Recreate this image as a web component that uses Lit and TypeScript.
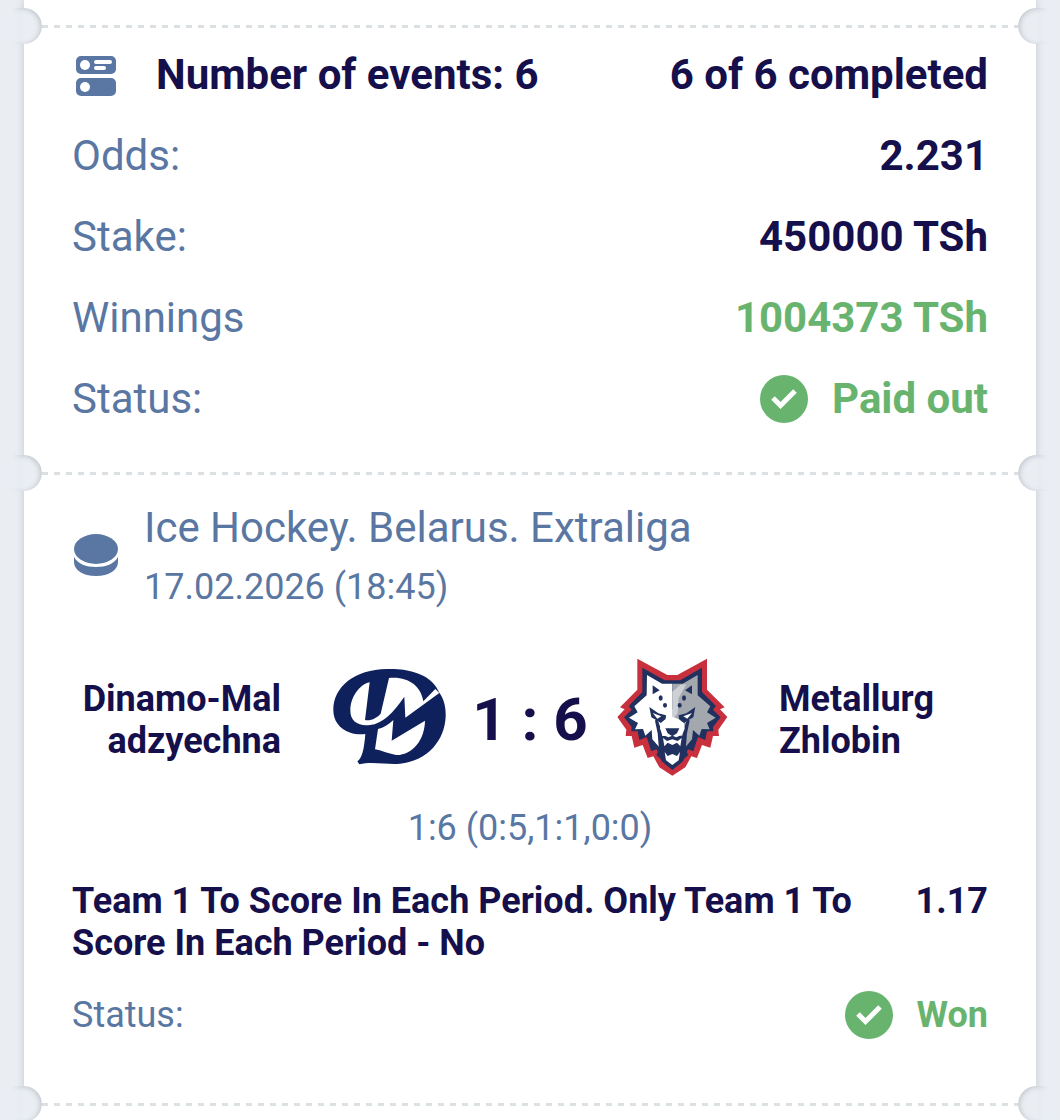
import { LitElement, html, css, svg } from 'lit';
import { customElement, property } from 'lit/decorators.js';

interface BetEvent {
  league: string;
  date: string;
  home: string;
  away: string;
  score: string;
  periods: string;
  market: string;
  odds: string;
  status: string;
}

const EVENT: BetEvent = {
  league: 'Ice Hockey. Belarus. Extraliga',
  date: '17.02.2026 (18:45)',
  home: 'Dinamo-Maladzyechna',
  away: 'Metallurg Zhlobin',
  score: '1 : 6',
  periods: '1:6 (0:5,1:1,0:0)',
  market: 'Team 1 To Score In Each Period. Only Team 1 To Score In Each Period - No',
  odds: '1.17',
  status: 'Won',
};

const eventsIcon = svg`
  <svg viewBox="0 0 48 48" aria-hidden="true">
    <rect x="4" y="5" width="40" height="18" rx="5" fill="#5977a2" />
    <rect x="4" y="27" width="40" height="18" rx="5" fill="#5977a2" />
    <circle cx="13" cy="14" r="5" fill="#fff" />
    <circle cx="13" cy="36" r="5" fill="#fff" />
    <path d="M24 11H38M24 17H32" stroke="#fff" stroke-width="4" stroke-linecap="round" />
  </svg>
`;

const puckIcon = svg`
  <svg viewBox="0 0 48 48" aria-hidden="true">
    <ellipse cx="24" cy="17" rx="22" ry="15" fill="#5977a2" />
    <path d="M2 25C6 32 14 35 24 35S42 32 46 25V30C46 38 37 44 24 44S2 38 2 30Z" fill="#5977a2" />
  </svg>
`;

const checkIcon = svg`
  <svg viewBox="0 0 48 48" aria-hidden="true">
    <circle cx="24" cy="24" r="24" fill="#68b46f" />
    <path d="M13 23L20.500 30.500L35 16" fill="none" stroke="#fff" stroke-width="5" />
  </svg>
`;

const dinamoLogo = svg`
  <svg viewBox="27 24 360 360" role="img" aria-label="Dinamo-Maladzyechna">
    <path fill="#0e215c" d="M200 57C265 55 325 72 349 112L358 128C372 147 378 172 377 200C374 270 324 332 240 341C205 345 155 333 118 343L112 334C126 325 132 300 136 252C88 258 40 232 40 180C40 110 105 58 200 57Z" />
    <path fill="#fff" d="M207 84C262 78 303 106 310 154L346 117L358 129L256 203L253 140C220 188 188 221 150 225C115 229 90 214 91 180C92 142 117 104 149 97L135 210C154 213 172 203 182 191Z" />
    <path fill="#fff" d="M174 237C191 233 205 224 220 210L215 272L315 212C314 268 279 316 228 315C203 311 184 301 165 298Z" />
  </svg>
`;

const metallurgLogo = svg`
  <svg viewBox="18 24 360 360" role="img" aria-label="Metallurg Zhlobin">
    <path fill="#c9303e" d="M97 26L187 75H217L306 26V119L359 172L345 178L367 201L340 239L342 258L324 258L316 293L291 285L276 324L259 319L241 352L202 377L163 352L145 319L128 324L113 285L88 293L80 258H62L64 239L37 201L59 178L45 172L97 119Z" />
    <path fill="#21315f" d="M112 53L179 91H225L291 53V126L333 168L324 179L347 202L324 231L325 244L306 244L301 270L279 261L265 304L249 298L234 334L202 360L170 334L155 298L139 304L125 261L103 270L98 244H79L80 231L57 202L80 179L71 168L112 126Z" />
    <path fill="#fff" d="M126 75L171 101H202V262H170L163 292L142 268L140 240L121 257L114 237L90 238L99 219L72 203L98 187L88 169L125 136Z" />
    <path fill="#a3a8ae" d="M202 101H233L278 75V136L316 169L306 187L332 203L306 219L314 238L290 237L283 257L264 240L261 268L241 292L234 262H202Z" />
    <path fill="#cdd0d5" d="M202 125L226 104L244 103L221 144L218 190L202 210Z" />
    <path fill="#21315f" d="M143 106L164 121L143 133ZM261 106V133L240 121Z" />
    <g fill="#21315f">
      <ellipse cx="167" cy="144" rx="6" ry="8" />
      <ellipse cx="180" cy="166" rx="6" ry="7" />
      <ellipse cx="237" cy="144" rx="6" ry="8" />
      <ellipse cx="224" cy="166" rx="6" ry="7" />
    </g>
    <path fill="#21315f" d="M156 204L166 232L172 258H232L238 232L248 204L254 212L246 250L242 300L250 315L202 356L154 315L162 300L158 250L150 212Z" />
    <path fill="#fff" d="M186 184L202 178V200L220 207L237 220L239 236L231 254L214 262L202 257L190 262L173 254L165 236L167 220L182 207Z" />
    <path fill="#21315f" d="M133 171L160 190L183 196L182 207L167 219L157 212L139 202ZM271 171L244 190L221 196L222 207L237 219L247 212L265 202Z" />
    <path fill="#fff" d="M143 189L169 199L157 206ZM261 189L235 199L247 206Z" />
    <path fill="#21315f" d="M181 235H223L216 250L202 259L188 250Z" />
    <path fill="#fff" d="M174 264L186 273L202 268L218 273L230 264L226 289L216 278L202 285L188 278L178 289ZM179 306L188 318L202 312L216 318L225 306L221 331L202 345L183 331Z" />
  </svg>
`;

@customElement('ticket-divider')
export class TicketDivider extends LitElement {
  static styles = css`
    :host {
      display: flex;
      align-items: center;
      position: relative;
      height: 28px;
      padding: 0 18px;
    }

    .dashes {
      flex: 1;
      height: 3px;
      background: repeating-linear-gradient(90deg, #dbe0e2 0 6px, transparent 6px 12px);
    }

    /* the outer half melts into the page, only the bite in the card is shaded */
    .notch {
      position: absolute;
      top: -4px;
      width: 42px;
      height: 36px;
      background: #eaeef3;
    }

    .left {
      left: -24px;
      border-radius: 0 18px 18px 0;
      box-shadow: inset -2px 1px 5px #c3c8cf;
      mask-image: linear-gradient(90deg, transparent 12px, #000 24px);
    }

    .right {
      right: -24px;
      border-radius: 18px 0 0 18px;
      box-shadow: inset 2px 1px 5px #c3c8cf;
      mask-image: linear-gradient(270deg, transparent 12px, #000 24px);
    }
  `;

  render() {
    return html`
      <div class="dashes"></div>
      <span class="notch left"></span>
      <span class="notch right"></span>
    `;
  }
}

@customElement('status-badge')
export class StatusBadge extends LitElement {
  @property() label = '';

  static styles = css`
    :host {
      display: flex;
      align-items: center;
      gap: 24px;
      color: #68b46f;
      font-weight: 700;
    }

    svg {
      display: block;
      width: 48px;
      height: 48px;
    }
  `;

  render() {
    return html`${checkIcon}<span>${this.label}</span>`;
  }
}

@customElement('app-root')
export class AppRoot extends LitElement {
  static styles = css`
    :host {
      display: block;
      box-sizing: border-box;
      min-height: 100vh;
      padding: 0 24px;
      overflow: hidden;
      background: #eaeef3;
      color: #150f4b;
      font-family: Roboto, 'Liberation Sans', sans-serif;
      font-size: 42px;
      line-height: 48px;
    }

    .ticket {
      box-sizing: border-box;
      min-height: 100vh;
      padding-top: 12px;
      background: #fff;
      box-shadow: 0 0 8px #c3c8cf;
    }

    h1,
    h2,
    p,
    dl,
    dd {
      margin: 0;
      font-size: inherit;
      font-weight: inherit;
    }

    svg {
      display: block;
      flex: none;
    }

    .icon svg {
      width: 48px;
      height: 48px;
    }

    .summary {
      display: flex;
      flex-direction: column;
      gap: 33px;
      padding: 11px 48px 36px;
    }

    .row {
      display: flex;
      align-items: center;
      justify-content: space-between;
    }

    dl {
      display: flex;
      flex-direction: column;
      gap: 33px;
    }

    dt {
      color: #5977a2;
    }

    dd,
    .bold {
      font-weight: 700;
    }

    .count {
      display: flex;
      align-items: center;
      gap: 36px;
    }

    .win {
      color: #68b46f;
    }

    .event {
      padding: 17px 48px 51px;
      font-size: 36px;
      line-height: 42px;
    }

    .head {
      display: flex;
      align-items: center;
      gap: 24px;
      color: #5977a2;
    }

    .head h2 {
      margin-bottom: 14px;
      font-size: 42px;
      line-height: 48px;
    }

    .match {
      display: grid;
      grid-template-columns: 1fr auto 1fr;
      align-items: center;
      gap: 48px;
      margin-top: 50px;
      font-weight: 700;
    }

    .home,
    .away,
    .score {
      padding-top: 4px;
    }

    .home {
      text-align: right;
      word-break: break-all;
    }

    .away {
      max-width: 200px;
    }

    .result {
      display: grid;
      grid-template-columns: 120px 162px 120px;
      align-items: center;
      text-align: center;
    }

    .result svg {
      width: 120px;
      height: 120px;
    }

    .score {
      font-size: 60px;
      line-height: 72px;
    }

    .periods {
      margin-top: 29px;
      color: #5977a2;
      text-align: center;
    }

    .market {
      display: flex;
      justify-content: space-between;
      gap: 48px;
      margin-top: 31px;
      font-weight: 700;
    }

    .event dl {
      margin-top: 27px;
    }
  `;

  render() {
    return html`
      <main class="ticket">
        <ticket-divider></ticket-divider>
        <section class="summary">
          <div class="row bold">
            <h1 class="count"><span class="icon">${eventsIcon}</span>Number of events: 6</h1>
            <span>6 of 6 completed</span>
          </div>
          <dl>
            ${this.renderRow('Odds:', '2.231')}
            ${this.renderRow('Stake:', '450000 TSh')}
            ${this.renderRow('Winnings', html`<span class="win">1004373 TSh</span>`)}
            ${this.renderRow('Status:', html`<status-badge label="Paid out"></status-badge>`)}
          </dl>
        </section>
        <ticket-divider></ticket-divider>
        ${this.renderEvent(EVENT)}
        <ticket-divider></ticket-divider>
      </main>
    `;
  }

  private renderRow(label: string, value: unknown) {
    return html`
      <div class="row">
        <dt>${label}</dt>
        <dd>${value}</dd>
      </div>
    `;
  }

  private renderEvent(event: BetEvent) {
    return html`
      <section class="event">
        <header class="head">
          <span class="icon">${puckIcon}</span>
          <div>
            <h2>${event.league}</h2>
            <p>${event.date}</p>
          </div>
        </header>
        <div class="match">
          <div class="home">${event.home}</div>
          <div class="result">
            ${dinamoLogo}
            <span class="score">${event.score}</span>
            ${metallurgLogo}
          </div>
          <div class="away">${event.away}</div>
        </div>
        <p class="periods">${event.periods}</p>
        <div class="market">
          <p>${event.market}</p>
          <span>${event.odds}</span>
        </div>
        <dl>
          ${this.renderRow('Status:', html`<status-badge label=${event.status}></status-badge>`)}
        </dl>
      </section>
    `;
  }
}

declare global {
  interface HTMLElementTagNameMap {
    'app-root': AppRoot;
    'status-badge': StatusBadge;
    'ticket-divider': TicketDivider;
  }
}
